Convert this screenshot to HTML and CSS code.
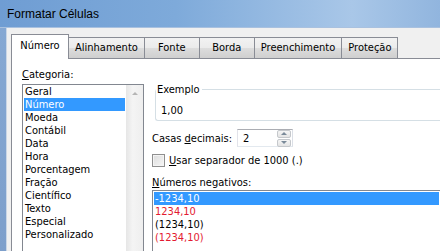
FILE: index.html
```html
<!DOCTYPE html>
<html lang="pt-BR">
<head>
    <meta charset="UTF-8">
    <title>Formatar Células</title>
    <link rel="stylesheet" href="styles.css">
</head>
<body>
    <div class="window">
        <div class="titlebar">Formatar Células</div>
        <div class="dialog">
            <!-- Tabs -->
            <div class="tabs">
                <div class="tab active">Número</div>
                <div class="tab">Alinhamento</div>
                <div class="tab">Fonte</div>
                <div class="tab">Borda</div>
                <div class="tab">Preenchimento</div>
                <div class="tab">Proteção</div>
            </div>

            <div class="panel">
                <!-- Category list -->
                <div class="col-left">
                    <div class="label"><u>C</u>ategoria:</div>
                    <div class="listbox">
                        <ul class="items">
                            <li>Geral</li>
                            <li class="selected">Número</li>
                            <li>Moeda</li>
                            <li>Contábil</li>
                            <li>Data</li>
                            <li>Hora</li>
                            <li>Porcentagem</li>
                            <li>Fração</li>
                            <li>Científico</li>
                            <li>Texto</li>
                            <li>Especial</li>
                            <li>Personalizado</li>
                        </ul>
                        <div class="scrollbar">
                            <span class="arrow-up"></span>
                        </div>
                    </div>
                </div>

                <!-- Number options -->
                <div class="col-right">
                    <fieldset class="sample">
                        <legend>Exemplo</legend>
                        <div class="sample-value">1,00</div>
                    </fieldset>

                    <div class="decimals">
                        <span>Casas <u>d</u>ecimais:</span>
                        <div class="spin">
                            <span class="spin-value">2</span>
                            <div class="spin-buttons">
                                <span class="spin-btn"><i class="tri-up"></i></span>
                                <span class="spin-btn"><i class="tri-down"></i></span>
                            </div>
                        </div>
                    </div>

                    <label class="check-row">
                        <span class="checkbox"></span>
                        <span><u>U</u>sar separador de 1000 (.)</span>
                    </label>

                    <div class="label neg-label"><u>N</u>úmeros negativos:</div>
                    <div class="listbox neg-list">
                        <ul class="items">
                            <li class="selected">-1234,10</li>
                            <li class="red">1234,10</li>
                            <li>(1234,10)</li>
                            <li class="red">(1234,10)</li>
                        </ul>
                    </div>
                </div>
            </div>
        </div>
    </div>
</body>
</html>
```

FILE: styles.css
```css
body {
    margin: 0;
    padding: 0;
    width: 440px;
    height: 251px;
    overflow: hidden;
    font-family: "DejaVu Sans Condensed", "DejaVu Sans", sans-serif;
    font-size: 11px;
    color: #000;
}

u {
    text-decoration: underline;
    text-underline-offset: 1px;
}

.window {
    height: 251px;
    background: linear-gradient(to bottom, #86a9d4, #7d9fcb);
}

/* Title bar */
.titlebar {
    height: 27px;
    line-height: 28px;
    padding-left: 7px;
    font-family: "Liberation Sans", sans-serif;
    font-size: 12px;
    background: linear-gradient(to right, #6f9dd3 0%, #7eaada 40%, #a9c7e8 80%, #91b5de 100%);
    border-bottom: 1px solid #a9c1df;
}

.dialog {
    margin-left: 6px;
    height: 223px;
    padding-top: 6px;
    padding-left: 4px;
    background: #f0f0f0;
    border-left: 1px solid #c9d6e6;
    box-sizing: border-box;
}

/* Tabs */
.tabs {
    display: flex;
    align-items: flex-end;
    padding-left: 2px;
    position: relative;
    z-index: 1;
}

.tab {
    height: 20px;
    line-height: 19px;
    min-width: 42px;
    padding: 0 6px;
    text-align: center;
    border: 1px solid #898c95;
    border-bottom: none;
    margin-right: -1px;
    background: linear-gradient(to bottom, #f2f2f2 0%, #ebebeb 50%, #dddddd 51%, #cfcfcf 100%);
}

.tab.active {
    height: 24px;
    line-height: 22px;
    margin: 0 -2px -1px -2px;
    padding: 0 7px;
    background: #fff;
    position: relative;
    z-index: 2;
}

.tab.active + .tab {
    margin-left: 1px;
}

/* Panel */
.panel {
    display: flex;
    height: 200px;
    padding-left: 10px;
    background: #fff;
    border: 1px solid #898c95;
    border-right: none;
}

.label {
    line-height: 13px;
}

.col-left {
    width: 122px;
    padding-top: 9px;
}

.col-left .label {
    margin-bottom: 3px;
}

.listbox {
    display: flex;
    height: 200px;
    border: 1px solid #828790;
    background: #fff;
}

.items {
    flex: 1;
    list-style: none;
    margin: 0;
    padding: 0 1px;
}

.items li {
    height: 13px;
    line-height: 13px;
    padding-left: 1px;
    white-space: nowrap;
}

.items li.selected {
    background: #3399ff;
    color: #fff;
}

.items li.red {
    color: #e31b30;
}

.scrollbar {
    width: 17px;
    background: linear-gradient(to right, #e6e6e6, #f4f4f4 40%, #eeeeee);
    display: flex;
    justify-content: center;
}

.arrow-up {
    margin-top: 7px;
    width: 0;
    height: 0;
    border-left: 3px solid transparent;
    border-right: 3px solid transparent;
    border-bottom: 3px solid #b5b5b5;
}

/* Right column */
.col-right {
    flex: 1;
    margin-left: 8px;
    padding-top: 24px;
}

.sample {
    margin: 0 0 0 3px;
    padding: 8px 0 3px 5px;
    border: 1px solid #d5dfe5;
    border-right: none;
    border-radius: 3px 0 0 3px;
}

.sample legend {
    padding: 0 2px 0 1px;
    margin-left: -5px;
    line-height: 13px;
}

.sample-value {
    line-height: 13px;
}

.decimals {
    display: flex;
    align-items: center;
    margin-top: 8px;
    height: 18px;
}

.decimals > span {
    width: 85px;
}

.spin {
    display: flex;
    align-items: center;
    justify-content: space-between;
    width: 48px;
    height: 16px;
    padding: 0 1px 0 5px;
    border: 1px solid #abadb3;
    border-left-color: #e2e3ea;
    border-bottom-color: #e3e9ef;
    border-right-color: #dbdfe6;
}

.spin-buttons {
    display: flex;
    flex-direction: column;
    gap: 1px;
}

.spin-btn {
    width: 12px;
    height: 6px;
    border: 1px solid #c5c8cc;
    border-radius: 2px;
    background: linear-gradient(to bottom, #f5f5f5, #e4e4e4);
    display: flex;
    align-items: center;
    justify-content: center;
}

.tri-up, .tri-down {
    width: 0;
    height: 0;
    border-left: 3px solid transparent;
    border-right: 3px solid transparent;
}

.tri-up {
    border-bottom: 3px solid #7a8a99;
}

.tri-down {
    border-top: 3px solid #7a8a99;
}

.check-row {
    display: flex;
    align-items: center;
    gap: 4px;
    margin-top: 7px;
    height: 13px;
}

.checkbox {
    width: 11px;
    height: 11px;
    border: 1px solid #8f8f8f;
    background: linear-gradient(135deg, #dcdcdc, #f6f6f6);
    box-shadow: inset 0 0 0 1px #f4f4f4;
}

.neg-label {
    margin-top: 9px;
    margin-bottom: 1px;
}

.neg-list {
    border-right: none;
    padding-top: 1px;
}
```
